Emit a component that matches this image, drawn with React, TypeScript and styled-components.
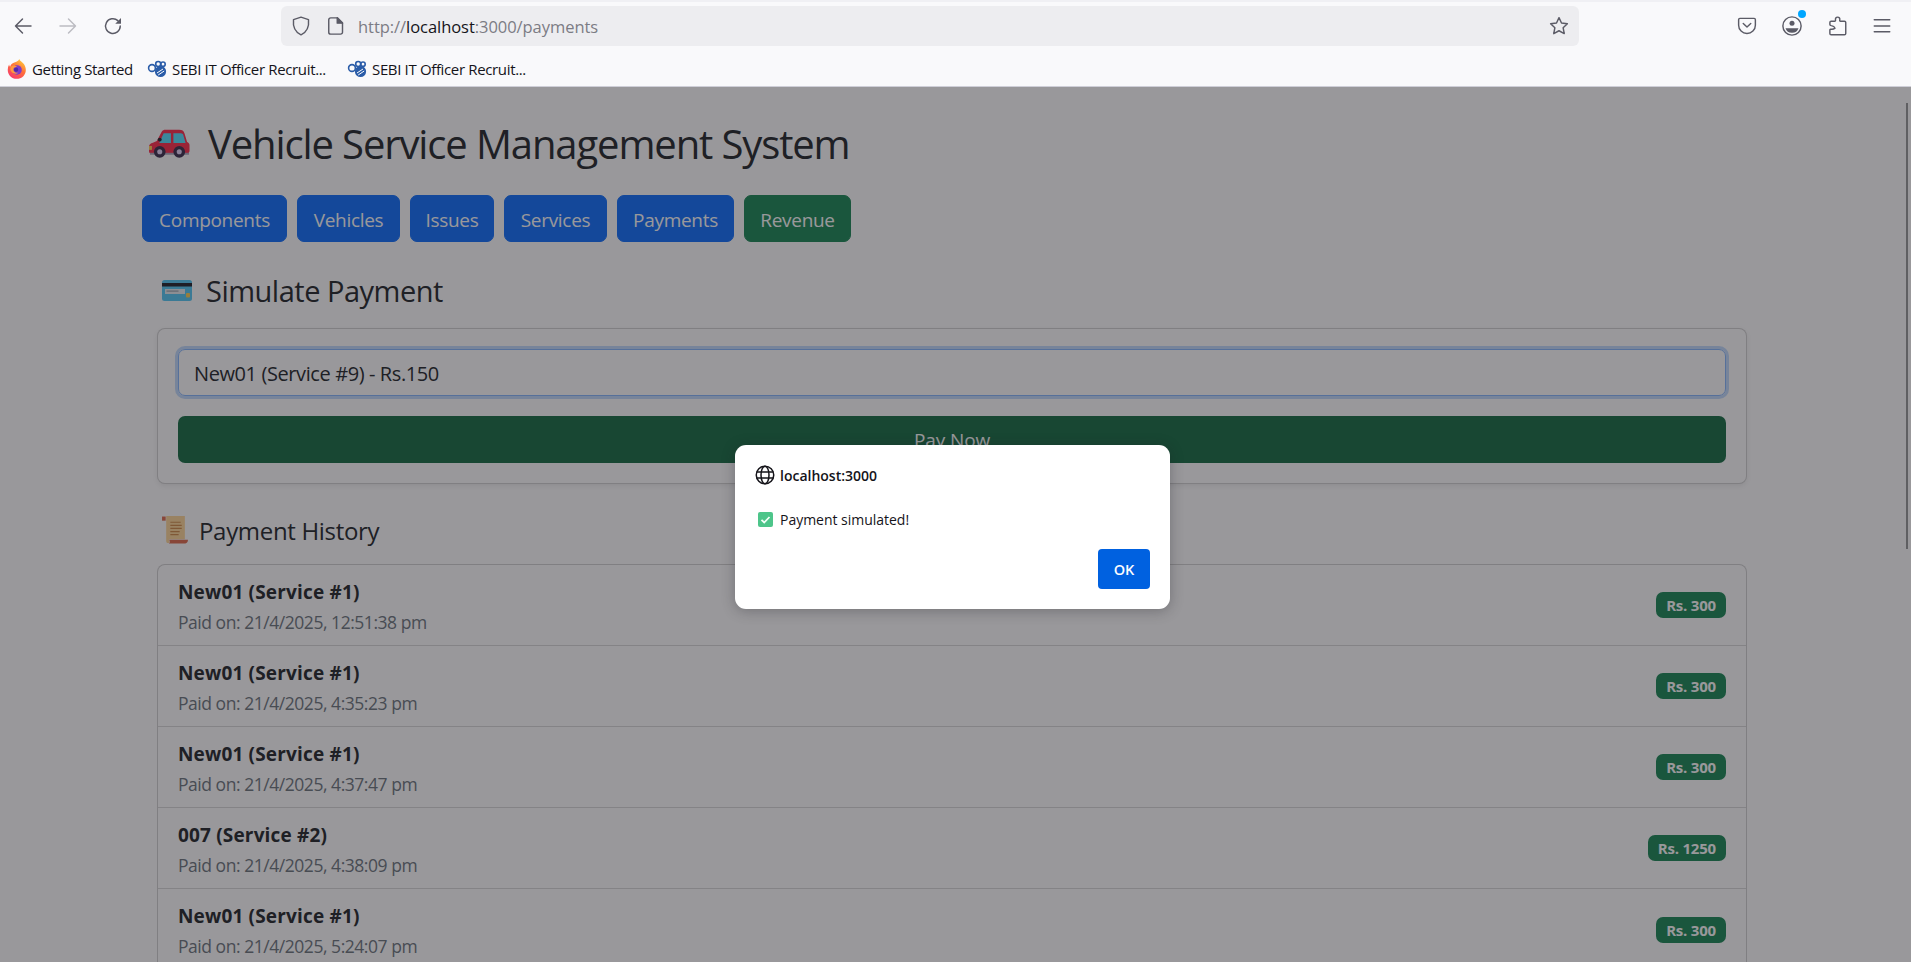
import React from 'react';
import styled, { createGlobalStyle } from 'styled-components';

const GlobalStyle = createGlobalStyle`
  html, body {
    margin: 0;
    padding: 0;
    height: 100%;
    overflow: hidden;
    background: #fff;
  }
  * {
    box-sizing: border-box;
  }
  body {
    font-family: "Open Sans", "Noto Sans", sans-serif;
    color: #212529;
  }
`;

const Root = styled.div`
  width: 1911px;
  height: 962px;
  display: flex;
  flex-direction: column;
  overflow: hidden;
`;

const BrowserChrome = styled.header`
  height: 87px;
  flex: none;
  background: #f9f9fb;
  border-top: 2px solid #f0f0f4;
  border-bottom: 1px solid #cfcfd8;
`;

const Toolbar = styled.div`
  height: 48px;
  padding: 0 7px 0 0;
  display: flex;
  align-items: center;
`;

const ToolButton = styled.div<{ $dim?: boolean }>`
  width: 45px;
  height: 40px;
  flex: none;
  display: flex;
  align-items: center;
  justify-content: center;
  position: relative;
  color: ${({ $dim }) => ($dim ? '#bcbcc2' : '#5b5b66')};
`;

const AddressBar = styled.div`
  width: 1298px;
  height: 40px;
  margin: 0 auto 0 146px;
  padding: 0 10px;
  display: flex;
  align-items: center;
  gap: 15px;
  background: #ededf0;
  border-radius: 6px;
  color: #5b5b66;
`;

const Url = styled.div`
  font-size: 16.5px;
  letter-spacing: -0.05px;
  color: #7c7c84;
  margin-left: -3px;
  flex: 1;

  b {
    font-weight: 400;
    color: #15141a;
  }
`;

const Notification = styled.span`
  position: absolute;
  top: 4px;
  right: 8px;
  width: 8px;
  height: 8px;
  border-radius: 50%;
  background: #00a6ff;
`;

const BookmarkBar = styled.div`
  height: 36px;
  padding: 1px 0 0 7px;
  display: flex;
  align-items: center;
`;

const Bookmark = styled.div<{ $width: number }>`
  width: ${({ $width }) => $width}px;
  display: flex;
  align-items: center;
  gap: 5px;
  font-size: 15px;
  letter-spacing: -0.35px;
  color: #15141a;
  white-space: nowrap;
`;

const Viewport = styled.main`
  flex: 1;
  position: relative;
  overflow: hidden;
`;

const Page = styled.div`
  padding: 33px 164px 0 142px;
`;

const Title = styled.h1`
  margin: 0 0 27px;
  height: 48px;
  display: flex;
  align-items: center;
  gap: 18px;
  padding-left: 7px;
  font-size: 40px;
  font-weight: 400;
  line-height: 48px;
  letter-spacing: -1.12px;
  white-space: nowrap;
`;

const Nav = styled.nav`
  display: flex;
  gap: 10px;
  margin-bottom: 30px;
`;

const NavButton = styled.button<{ $green?: boolean; $width: number }>`
  width: ${({ $width }) => $width}px;
  height: 47px;
  padding: 2px 0 0;
  border: 1px solid ${({ $green }) => ($green ? '#198754' : '#0d6efd')};
  border-radius: 7px;
  background: ${({ $green }) => ($green ? '#198754' : '#0d6efd')};
  color: #fff;
  font-family: inherit;
  font-size: 19px;
  letter-spacing: -0.3px;
`;

const Section = styled.section`
  margin-left: 15px;
`;

const SectionTitle = styled.h3<{ $small?: boolean }>`
  margin: 0 0 ${({ $small }) => ($small ? '19px' : '20px')};
  height: ${({ $small }) => ($small ? '30px' : '36px')};
  display: flex;
  align-items: center;
  gap: ${({ $small }) => ($small ? '11px' : '14px')};
  padding-left: 5px;
  font-size: ${({ $small }) => ($small ? '24px' : '29px')};
  font-weight: 400;
  letter-spacing: ${({ $small }) => ($small ? '-0.32px' : '-0.5px')};
  white-space: nowrap;
`;

const Card = styled.div`
  padding: 20px;
  margin-bottom: 31px;
  display: flex;
  flex-direction: column;
  gap: 20px;
  background: #fff;
  border: 1px solid rgba(0, 0, 0, 0.18);
  border-radius: 8px;
  box-shadow: 0 2px 5px rgba(0, 0, 0, 0.08);
`;

const Select = styled.div`
  height: 47px;
  padding: 2px 15px 0;
  display: flex;
  align-items: center;
  font-size: 20px;
  letter-spacing: -0.4px;
  border: 1px solid #86b7fe;
  border-radius: 7px;
  box-shadow: 0 0 0 3px rgba(13, 110, 253, 0.25);
`;

const PayButton = styled.button`
  height: 47px;
  padding: 1px 0 0;
  border: none;
  border-radius: 7px;
  background: #146c43;
  color: #fff;
  font-family: inherit;
  font-size: 19px;
  letter-spacing: -0.1px;
`;

const List = styled.ul`
  margin: 0;
  padding: 0;
  list-style: none;
  background: #fff;
  border: 1px solid rgba(0, 0, 0, 0.18);
  border-radius: 8px;
`;

const Row = styled.li`
  height: 81px;
  padding: 0 20px;
  display: flex;
  align-items: center;
  justify-content: space-between;
  border-bottom: 1px solid rgba(0, 0, 0, 0.15);

  &:last-child {
    border-bottom: none;
  }
`;

const RowText = styled.div`
  margin-top: 2px;
  display: flex;
  flex-direction: column;
  gap: 5px;
`;

const RowTitle = styled.div`
  font-size: 19px;
  font-weight: 700;
  line-height: 26px;
  letter-spacing: 0.17px;
`;

const RowMeta = styled.div`
  font-size: 17.5px;
  line-height: 24px;
  letter-spacing: -0.46px;
  color: #6c757d;
`;

const Badge = styled.span`
  height: 26px;
  padding: 0 10px;
  display: flex;
  align-items: center;
  border-radius: 7px;
  background: #198754;
  color: #fff;
  font-size: 15px;
  font-weight: 700;
  letter-spacing: -0.2px;
`;

const Overlay = styled.div`
  position: absolute;
  inset: 0;
  background: rgba(28, 27, 34, 0.45);
`;

const ScrollThumb = styled.div`
  position: absolute;
  top: 16px;
  right: 3px;
  width: 2px;
  height: 446px;
  background: #5f5f62;
`;

const Dialog = styled.div`
  position: absolute;
  left: 735px;
  top: 358px;
  width: 435px;
  height: 164px;
  padding: 20px;
  display: flex;
  flex-direction: column;
  background: #fff;
  border-radius: 11px;
  box-shadow: 0 2px 14px rgba(28, 27, 34, 0.3);
  color: #15141a;
`;

const DialogHead = styled.div`
  height: 20px;
  display: flex;
  align-items: center;
  gap: 5px;
  font-size: 14px;
  font-weight: 600;
`;

const DialogBody = styled.div`
  height: 20px;
  margin-top: 24px;
  padding-left: 3px;
  display: flex;
  align-items: center;
  gap: 7px;
  font-size: 14px;
  letter-spacing: -0.02px;
`;

const OkButton = styled.button`
  width: 52px;
  height: 40px;
  margin: auto 0 0 auto;
  border: none;
  border-radius: 4px;
  background: #0061e0;
  color: #fbfbfe;
  font-family: inherit;
  font-size: 14.5px;
  font-weight: 600;
`;

type IconProps = { size?: number };

const Ico: React.FC<IconProps & { children: React.ReactNode }> = ({ size = 20, children }) => (
  <svg width={size} height={size} viewBox="0 0 16 16" fill="none" stroke="currentColor" strokeWidth={1.15} strokeLinecap="round" strokeLinejoin="round">
    {children}
  </svg>
);

const BackIcon = () => (
  <Ico>
    <path d="M2 8h12.400M7.600 2.400 2 8l5.600 5.600" />
  </Ico>
);

const ForwardIcon = () => (
  <Ico>
    <path d="M14 8H1.600M8.400 2.400 14 8l-5.600 5.600" />
  </Ico>
);

const ReloadIcon = () => (
  <Ico>
    <path d="M13.800 8a5.900 5.900 0 1 1-1.900-4.300" />
    <path d="M14.400 1.600v4.600H9.800z" fill="currentColor" stroke="none" />
  </Ico>
);

const ShieldIcon = () => (
  <Ico>
    <path d="M8 .9l6 2c.6 5.500-1.400 10-6 12.200C3.400 12.900 1.400 8.400 2 2.900z" />
  </Ico>
);

const PageIcon = () => (
  <Ico>
    <path d="M3.700 1.500h5.300l4.200 4.200v7.300a1.500 1.500 0 0 1-1.500 1.500H3.700a1.500 1.500 0 0 1-1.500-1.500V3a1.500 1.500 0 0 1 1.500-1.500z" />
    <path d="M9 1.500v4.200h4.200z" fill="currentColor" />
  </Ico>
);

const StarIcon = () => (
  <Ico>
    <path d="M8 1.300l2 4.300 4.700.6-3.400 3.200.9 4.700L8 11.800l-4.200 2.300.9-4.700L1.300 6.200 6 5.600z" />
  </Ico>
);

const PocketIcon = () => (
  <Ico>
    <path d="M2.300 1.900h11.400a1 1 0 0 1 1 1v4.400a6.700 6.700 0 0 1-13.400 0V2.900a1 1 0 0 1 1-1z" />
    <path d="M5 6l3 2.800L11 6" />
  </Ico>
);

const AccountIcon = () => (
  <svg width={20} height={20} viewBox="0 0 16 16" fill="none" stroke="currentColor" strokeWidth={1.15}>
    <circle cx="8" cy="8" r="7.300" />
    <circle cx="8" cy="5.800" r="2" fill="currentColor" stroke="none" />
    <path d="M2.800 9.700h10.400A5.400 5.400 0 0 1 8 13.300a5.400 5.400 0 0 1-5.200-3.600z" fill="currentColor" stroke="none" />
  </svg>
);

const PuzzleIcon = () => (
  <Ico>
    <path d="M8.500.9c1.300 0 2 1.100 1.700 2.300-.1.600 0 1 .6 1h3.200c.6 0 1 .4 1 1V14c0 .7-.4 1-1 1H3.300c-.6 0-1-.4-1-1v-2.800c0-.5.4-.7.9-.6 1.200.2 2.200 0 3.200-.9-.3-.9-1.300-1.800-3-2-.7-.1-1.100-.4-1.100-1V5.200c0-.6.4-1 1-1h2.800c.6 0 .8-.4.7-.9C6.500 2 7.200.9 8.500.9z" />
  </Ico>
);

const MenuIcon = () => (
  <Ico>
    <path d="M1.800 3h12.400M1.800 8h12.400M1.800 12.600h12.400" />
  </Ico>
);

const GlobeIcon = () => (
  <svg width={20} height={20} viewBox="0 0 16 16" fill="none" stroke="#15141a" strokeWidth={1.2}>
    <circle cx="8" cy="8" r="7" />
    <ellipse cx="8" cy="8" rx="3.200" ry="7" />
    <path d="M1.300 5.600h13.400M1.300 10.400h13.400" />
  </svg>
);

const FirefoxLogo = () => (
  <svg width={20} height={21} viewBox="0 0 18 19" preserveAspectRatio="none">
    <defs>
      <linearGradient id="ffOuter" x1="0.8" y1="0" x2="0.2" y2="1">
        <stop offset="0" stopColor="#ffd43a" />
        <stop offset="0.45" stopColor="#ff7139" />
        <stop offset="1" stopColor="#f5366f" />
      </linearGradient>
    </defs>
    <path d="M11 .8c.6 2 2.900 2.700 4.200 4.700 2.500 3.600 2.300 8-.5 10.900-3.400 3.300-9 3.200-12-.2C.2 13.400.1 9.200 1.900 5.900c.1 1 .5 1.700 1 2.100.3-1.700 1.200-2.800 2.600-3.500C7.700 3.500 10.400 3 11 .8z" fill="url(#ffOuter)" />
    <circle cx="9" cy="10.800" r="4.300" fill="#7d3bc9" />
    <circle cx="8.200" cy="10.600" r="1.900" fill="#4b2aa8" />
    <path d="M3.500 8c2-1.800 4.300-1.200 5.500.2-2-.2-3.500.8-3.200 2.600.3 1.900 2.500 3 4.600 2.400-2 1.900-5.400 1.200-6.700-1.100-.8-1.300-.9-2.800-.2-4.100z" fill="#ff9a3c" />
  </svg>
);

const SebiLogo = () => (
  <svg width={20} height={18} viewBox="0 0 20 18" fill="none" stroke="#2a5ca8" strokeWidth={1.6}>
    <circle cx="5" cy="8" r="3.400" />
    <circle cx="11.200" cy="4" r="2.500" />
    <circle cx="16" cy="4.200" r="2.200" />
    <circle cx="13.500" cy="11.500" r="4.800" fill="#2a5ca8" />
    <path d="M10 13l6-4M11.200 15l6-4" stroke="#fff" strokeWidth={1} />
  </svg>
);

const CarEmoji = () => (
  <svg width={41} height={30} viewBox="0 0 42 30">
    <path d="M13 2.500c1-1.500 2-2 4-2h14c3 0 4.500 1 5.500 4l2.500 8.500c1.500.7 2.500 1.500 2.500 3v6c0 1.500-1 3-3 3H2.500C1 25 0 24 0 22.500V18c0-2.500 1.500-3.700 4-4.300L8 12z" fill="#ff2a4a" />
    <path d="M15 4h7.500v10H10.500z" fill="#55e0ff" />
    <path d="M25 4h7.500c1.500 0 2.300.7 2.700 2L37.500 14H25z" fill="#55e0ff" />
    <rect x="0" y="17" width="3" height="4" fill="#ffd050" />
    <circle cx="11" cy="10.500" r="2" fill="#22222a" />
    <rect x="1" y="24" width="40" height="2" fill="#b0a6bc" />
    <circle cx="11" cy="23" r="6" fill="#3a2c4c" />
    <circle cx="11" cy="23" r="2.600" fill="#e4d4f8" />
    <circle cx="31" cy="23" r="6" fill="#3a2c4c" />
    <circle cx="31" cy="23" r="2.600" fill="#e4d4f8" />
  </svg>
);

const CardEmoji = () => (
  <svg width={30} height={21} viewBox="0 0 30 21">
    <rect x="0" y="0" width="30" height="21" rx="2.500" fill="#55c8f5" />
    <rect x="0" y="3" width="30" height="3.500" fill="#22222a" />
    <rect x="3" y="9" width="20" height="5" fill="#e7edf0" />
    <rect x="4.500" y="10.500" width="12" height="1.200" fill="#9aa5ad" />
    <rect x="24" y="13" width="4" height="4.500" rx="1" fill="#ffd050" />
  </svg>
);

const ScrollEmoji = () => (
  <svg width={26} height={28} viewBox="0 0 25 27">
    <path d="M0 .5h3.500v4H0z" fill="#e06a4c" />
    <path d="M4 0h18v22.500H7V26H6C4.500 26 4 25 4 24z" fill="#ffd898" />
    <path d="M7 23h18c0 2-1 3.500-2.500 3.500H6.500C8 26 7.500 24.500 7 23z" fill="#e06a4c" />
    <path d="M8 6h10M8 9h11M8 12h11M8 15h9M8 18h8" stroke="#d08a48" strokeWidth={1.100} />
  </svg>
);

const CheckEmoji = () => (
  <svg width={15} height={15} viewBox="0 0 15 15">
    <rect width="15" height="15" rx="2" fill="#4dc58a" />
    <path d="M3.500 7.800l2.700 2.700 5.300-5.500" fill="none" stroke="#f4fff9" strokeWidth={1.800} />
  </svg>
);

type Payment = { name: string; paidOn: string; amount: number };

const payments: Payment[] = [
  { name: 'New01 (Service #1)', paidOn: '21/4/2025, 12:51:38 pm', amount: 300 },
  { name: 'New01 (Service #1)', paidOn: '21/4/2025, 4:35:23 pm', amount: 300 },
  { name: 'New01 (Service #1)', paidOn: '21/4/2025, 4:37:47 pm', amount: 300 },
  { name: '007 (Service #2)', paidOn: '21/4/2025, 4:38:09 pm', amount: 1250 },
  { name: 'New01 (Service #1)', paidOn: '21/4/2025, 5:24:07 pm', amount: 300 },
];

const navItems = [
  { label: 'Components', width: 145 },
  { label: 'Vehicles', width: 103 },
  { label: 'Issues', width: 84 },
  { label: 'Services', width: 103 },
  { label: 'Payments', width: 117 },
];

const App: React.FC = () => (
  <Root>
    <GlobalStyle />
    <BrowserChrome>
      <Toolbar>
        <ToolButton><BackIcon /></ToolButton>
        <ToolButton $dim><ForwardIcon /></ToolButton>
        <ToolButton><ReloadIcon /></ToolButton>
        <AddressBar>
          <ShieldIcon />
          <PageIcon />
          <Url>http://<b>localhost</b>:3000/payments</Url>
          <StarIcon />
        </AddressBar>
        <ToolButton><PocketIcon /></ToolButton>
        <ToolButton><AccountIcon /><Notification /></ToolButton>
        <ToolButton><PuzzleIcon /></ToolButton>
        <ToolButton><MenuIcon /></ToolButton>
      </Toolbar>
      <BookmarkBar>
        <Bookmark $width={140}><FirefoxLogo />Getting Started</Bookmark>
        <Bookmark $width={200}><SebiLogo />SEBI IT Officer Recruit...</Bookmark>
        <Bookmark $width={200}><SebiLogo />SEBI IT Officer Recruit...</Bookmark>
      </BookmarkBar>
    </BrowserChrome>
    <Viewport>
      <Page>
        <Title><CarEmoji />Vehicle Service Management System</Title>
        <Nav>
          {navItems.map((item) => (
            <NavButton key={item.label} $width={item.width}>{item.label}</NavButton>
          ))}
          <NavButton $green $width={107}>Revenue</NavButton>
        </Nav>
        <Section>
          <SectionTitle><CardEmoji />Simulate Payment</SectionTitle>
          <Card>
            <Select>New01 (Service #9) - Rs.150</Select>
            <PayButton>Pay Now</PayButton>
          </Card>
          <SectionTitle $small><ScrollEmoji />Payment History</SectionTitle>
          <List>
            {payments.map((p) => (
              <Row key={p.paidOn}>
                <RowText>
                  <RowTitle>{p.name}</RowTitle>
                  <RowMeta>Paid on: {p.paidOn}</RowMeta>
                </RowText>
                <Badge>Rs. {p.amount}</Badge>
              </Row>
            ))}
          </List>
        </Section>
      </Page>
      <Overlay />
      <ScrollThumb />
      <Dialog>
        <DialogHead><GlobeIcon />localhost:3000</DialogHead>
        <DialogBody><CheckEmoji />Payment simulated!</DialogBody>
        <OkButton>OK</OkButton>
      </Dialog>
    </Viewport>
  </Root>
);

export default App;
